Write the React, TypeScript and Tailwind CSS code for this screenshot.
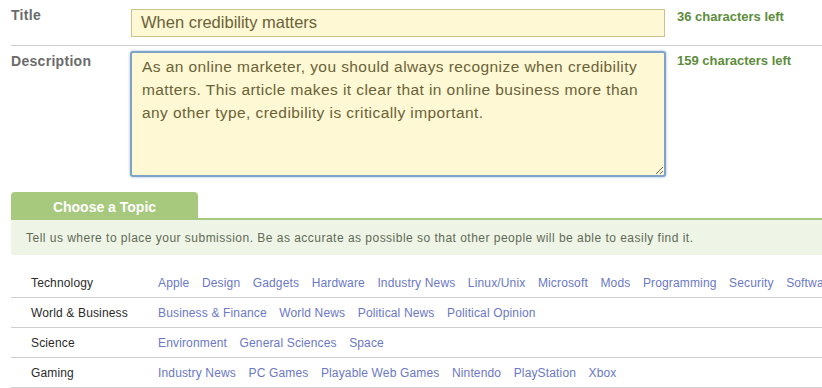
import React from "react";

const rows: { name: string; links: string[] }[] = [
  {
    name: "Technology",
    links: [
      "Apple",
      "Design",
      "Gadgets",
      "Hardware",
      "Industry News",
      "Linux/Unix",
      "Microsoft",
      "Mods",
      "Programming",
      "Security",
      "Software",
    ],
  },
  {
    name: "World & Business",
    links: ["Business & Finance", "World News", "Political News", "Political Opinion"],
  },
  { name: "Science", links: ["Environment", "General Sciences", "Space"] },
  {
    name: "Gaming",
    links: ["Industry News", "PC Games", "Playable Web Games", "Nintendo", "PlayStation", "Xbox"],
  },
];

export default function App() {
  return (
    <div className="w-[822px] h-[388px] overflow-hidden bg-white pl-[11px] font-['Liberation_Sans',Arial,sans-serif]">
      {/* Title row */}
      <div className="flex items-start h-[46px] pt-[9px] border-b border-[#cfcfcf]">
        <div className="w-[120px] -mt-[2px] text-[14px] leading-[16px] font-bold tracking-[0.3px] text-[#6b6b6b]">
          Title
        </div>
        <input
          readOnly
          defaultValue="When credibility matters"
          className="w-[534px] h-[28px] box-border border border-[#cbc38b] bg-[#fef8d5] pl-[9px] pt-0 pb-[2px] text-[16.5px] text-[#6b6236] outline-none font-['Liberation_Sans',Arial,sans-serif]"
        />
        <div className="ml-[12px] text-[13px] leading-[16px] font-bold text-[#5d8c3c]">
          36 characters left
        </div>
      </div>

      {/* Description row */}
      <div className="flex items-start pt-[5px]">
        <div className="w-[119px] mt-[2px] text-[14px] leading-[16px] font-bold tracking-[0.3px] text-[#6b6b6b]">
          Description
        </div>
        <textarea
          readOnly
          defaultValue="As an online marketer, you should always recognize when credibility matters. This article makes it clear that in online business more than any other type, credibility is critically important."
          className="w-[536px] h-[126px] box-border border-2 border-[#7fa2c8] rounded-[3px] shadow-[0_0_3px_#9dbde0] bg-[#fef8d5] pl-[10px] pr-[10px] pt-[2px] text-[15.5px] leading-[23px] tracking-[0.42px] text-[#6b6236] outline-none font-['Liberation_Sans',Arial,sans-serif]"
        />
        <div className="ml-[11px] mt-[2px] text-[13px] leading-[16px] font-bold text-[#5d8c3c]">
          159 characters left
        </div>
      </div>

      {/* Tab */}
      <div className="mt-[15px] w-[187px] h-[26px] pt-[4px] rounded-t-[4px] bg-[#a7c97d] flex items-center justify-center text-[14px] font-bold text-white">
        Choose a Topic
      </div>
      <div className="h-[2px] bg-[#a7c97d]" />
      <div className="h-[35px] bg-[#eef5e7] pl-[15px] pt-[1px] text-[12px] leading-[35px] tracking-[0.48px] text-[#5f6a55] whitespace-nowrap">
        Tell us where to place your submission. Be as accurate as possible so that other people will be able to easily find it.
      </div>

      {/* Category rows */}
      <div className="mt-[13px]">
        {rows.map((r) => (
          <div
            key={r.name}
            className="flex items-center h-[30px] border-b border-[#cfcfcf] pl-[20px] whitespace-nowrap overflow-hidden text-[12px] tracking-[0.15px]"
          >
            <div className="w-[127px] shrink-0 text-[#2a2a2a]">{r.name}</div>
            <div className="flex gap-x-[12.5px]">
              {r.links.map((l, i) => (
                <span key={i} className="text-[#6a78c6]">
                  {l}
                </span>
              ))}
            </div>
          </div>
        ))}
      </div>
    </div>
  );
}
